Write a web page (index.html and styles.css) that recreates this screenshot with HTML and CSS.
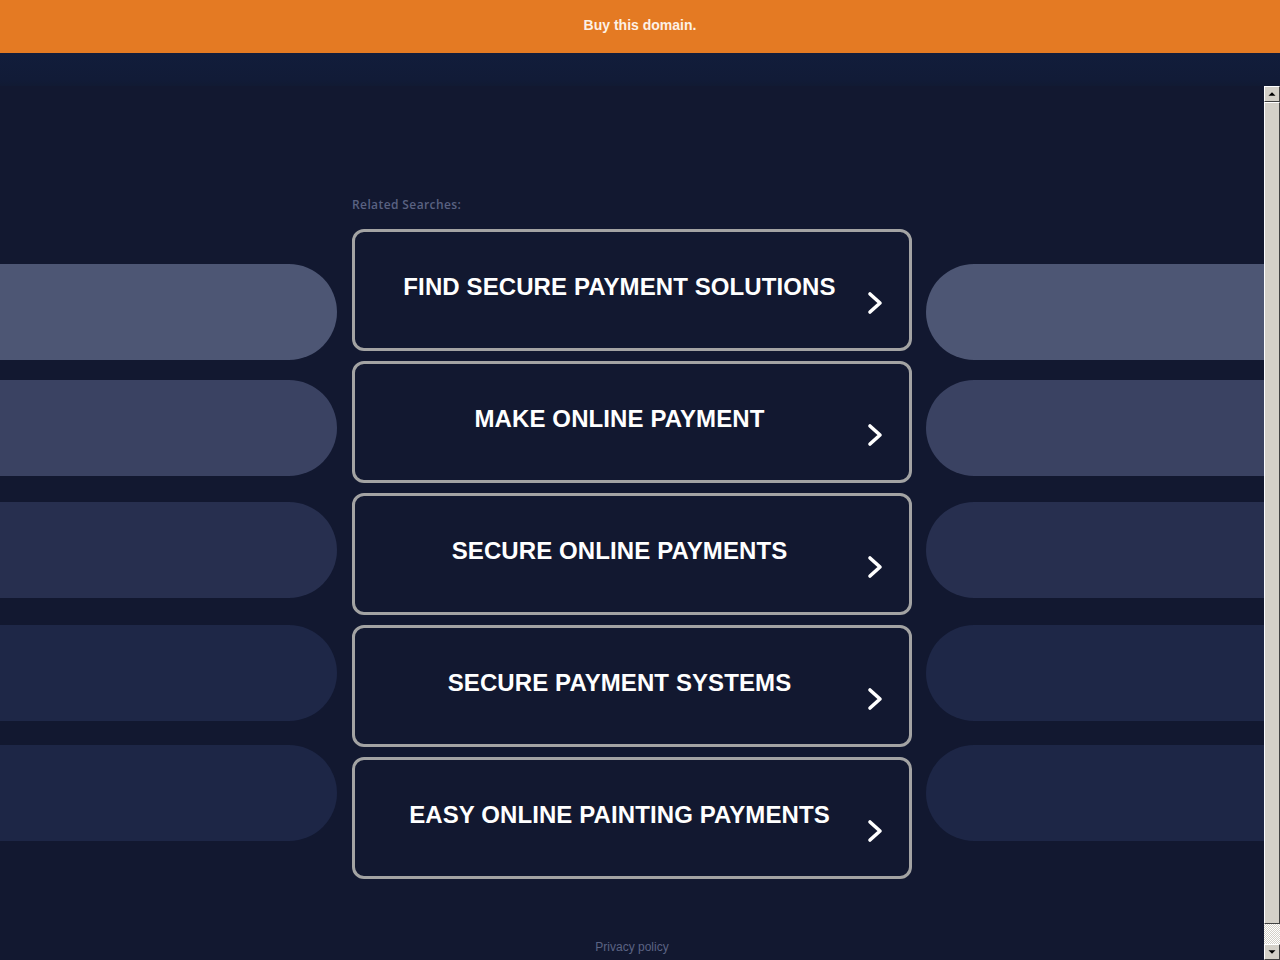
FILE: index.html
```html
<!DOCTYPE html>
<html lang="en">
<head>
	<meta charset="UTF-8">
	<title>Related Searches</title>
	<link rel="stylesheet" href="styles.css">
</head>
<body>
	<div class="topbar"><a href="#">Buy this domain.</a></div>
	<div class="band"></div>
	<div class="frame">
		<div class="content">
			<div class="pills pills-left">
				<div class="pill tone-1"></div>
				<div class="pill tone-2"></div>
				<div class="pill tone-3"></div>
				<div class="pill tone-4"></div>
				<div class="pill tone-5"></div>
			</div>
			<div class="center">
				<p class="label">Related Searches:</p>
				<a class="search" href="#"><span>FIND SECURE PAYMENT SOLUTIONS</span><svg class="chev" viewBox="0 0 16 24"><path d="M3 3 L13 12 L3 21"/></svg></a>
				<a class="search" href="#"><span>MAKE ONLINE PAYMENT</span><svg class="chev" viewBox="0 0 16 24"><path d="M3 3 L13 12 L3 21"/></svg></a>
				<a class="search" href="#"><span>SECURE ONLINE PAYMENTS</span><svg class="chev" viewBox="0 0 16 24"><path d="M3 3 L13 12 L3 21"/></svg></a>
				<a class="search" href="#"><span>SECURE PAYMENT SYSTEMS</span><svg class="chev" viewBox="0 0 16 24"><path d="M3 3 L13 12 L3 21"/></svg></a>
				<a class="search" href="#"><span>EASY ONLINE PAINTING PAYMENTS</span><svg class="chev" viewBox="0 0 16 24"><path d="M3 3 L13 12 L3 21"/></svg></a>
				<a class="privacy" href="#">Privacy policy</a>
			</div>
			<div class="pills pills-right">
				<div class="pill tone-1"></div>
				<div class="pill tone-2"></div>
				<div class="pill tone-3"></div>
				<div class="pill tone-4"></div>
				<div class="pill tone-5"></div>
			</div>
		</div>
		<div class="scrollbar">
			<div class="sb-btn"><svg viewBox="0 0 16 16"><path d="M4 10 L12 10 L8 6 Z"/></svg></div>
			<div class="sb-thumb"></div>
			<div class="sb-track"></div>
			<div class="sb-btn"><svg viewBox="0 0 16 16"><path d="M4 6 L12 6 L8 10 Z"/></svg></div>
		</div>
	</div>
</body>
</html>
```

FILE: styles.css
```css
body {
	margin: 0;
	background: #121830;
	overflow: hidden;
	font-family: "Liberation Sans", Arial, sans-serif;
}

.topbar {
	height: 53px;
	background: #e47a23;
	text-align: center;
	line-height: 50px;
}

.topbar a {
	color: #fdf1e6;
	font-size: 14px;
	font-weight: bold;
	text-decoration: none;
}

.band {
	height: 33px;
	background: linear-gradient(#121d3b, #111b37 80%, #111a33);
}

.frame {
	display: flex;
	height: 874px;
}

.content {
	flex: 1;
	display: grid;
	grid-template-columns: 337px 15px 560px 14px 1fr;
}

.pills-left {
	grid-column: 1;
}

.center {
	grid-column: 3;
}

.pills-right {
	grid-column: 5;
}

.pills {
	display: flex;
	flex-direction: column;
	padding-top: 178px;
}

.pill {
	height: 96px;
	margin-bottom: 24px;
}

.pills .tone-2 {
	margin-top: -4px;
}

.pills .tone-3 {
	margin-top: 2px;
}

.pills .tone-4 {
	margin-top: 3px;
}

.pills-left .pill {
	border-radius: 0 48px 48px 0;
}

.pills-right .pill {
	border-radius: 48px 0 0 48px;
}

.tone-1 { background: #4d5674; }
.tone-2 { background: #3a4262; }
.tone-3 { background: #272f4f; }
.tone-4 { background: #1e2747; }
.tone-5 { background: #1d2646; }

.center {
	display: flex;
	flex-direction: column;
	padding-top: 111px;
}

.label {
	margin: 0 0 17px 0;
	font-family: "Open Sans", sans-serif;
	font-size: 12px;
	font-weight: 600;
	letter-spacing: 0.4px;
	line-height: 15px;
	color: #5a6282;
}

.search {
	display: grid;
	height: 116px;
	margin-bottom: 10px;
	border: 3px solid #a3a3a3;
	border-radius: 12px;
	text-decoration: none;
	color: #ffffff;
}

.search span {
	grid-area: 1 / 1;
	align-self: center;
	text-align: center;
	padding: 0 25px 6px 0;
	font-size: 24px;
	font-weight: bold;
	letter-spacing: 0.1px;
}

.search .chev {
	grid-area: 1 / 1;
	justify-self: end;
	align-self: center;
	width: 16px;
	height: 24px;
	margin: 26px 26px 0 0;
	fill: none;
	stroke: #ffffff;
	stroke-width: 3.6;
	stroke-linecap: round;
	stroke-linejoin: round;
}

.privacy {
	margin-top: 51px;
	text-align: center;
	font-size: 12px;
	line-height: 15px;
	color: #5b6383;
	text-decoration: none;
}

.scrollbar {
	width: 16px;
	display: flex;
	flex-direction: column;
	background: #d4d0c8;
}

.sb-btn {
	height: 14px;
	background: #d4d0c8;
	border: 1px solid;
	border-color: #ffffff #404040 #404040 #ffffff;
}

.sb-btn svg {
	display: block;
	width: 14px;
	height: 14px;
	fill: #000000;
}

.sb-thumb {
	flex: 1;
	background: #d4d0c8;
	border: 1px solid;
	border-color: #ffffff #404040 #404040 #ffffff;
}

.sb-track {
	height: 20px;
	background-color: #ffffff;
	background-image: repeating-conic-gradient(#d4d0c8 0 25%, #ffffff 0 50%);
	background-size: 2px 2px;
}
```
